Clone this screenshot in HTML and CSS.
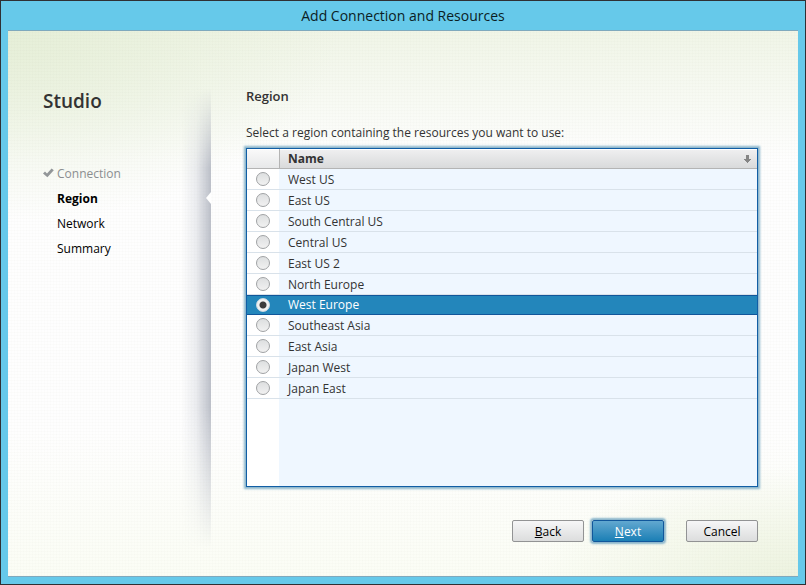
FILE: index.html
```html
<!DOCTYPE html>
<html lang="en">
<head>
<meta charset="utf-8">
<title>Add Connection and Resources</title>
<link rel="stylesheet" href="styles.css">
</head>
<body>
<div class="window">
  <header class="titlebar">Add Connection and Resources</header>
  <div class="client">
    <aside class="sidebar">
      <h1 class="brand">Studio</h1>
      <ol class="steps">
        <li class="step done"><svg class="check" viewBox="0 0 11 10" aria-hidden="true"><path d="M0 5.6 2 3.6 4 5.4 8.6.6 10.8 2.2 4.4 9.2z"/></svg>Connection</li>
        <li class="step current" aria-current="step">Region</li>
        <li class="step">Network</li>
        <li class="step">Summary</li>
      </ol>
      <div class="fold" aria-hidden="true"></div>
    </aside>
    <form class="page">
      <h2 class="heading">Region</h2>
      <p class="prompt" id="prompt">Select a region containing the resources you want to use:</p>
      <div class="grid">
        <table class="regions" aria-labelledby="prompt">
          <thead>
            <tr><th class="pick"></th><th class="name"><span class="sort">Name<svg class="arrow" viewBox="0 0 7 8" aria-hidden="true"><path d="M2 0h3v4h2v1h-1v1h-1v1h-1v1h-1v-1h-1v-1h-1v-1h-1v-1h2z"/></svg></span></th></tr>
          </thead>
          <tbody>
            <tr><td class="pick"><input type="radio" name="region" id="r1"></td><td><label for="r1">West US</label></td></tr>
            <tr><td class="pick"><input type="radio" name="region" id="r2"></td><td><label for="r2">East US</label></td></tr>
            <tr><td class="pick"><input type="radio" name="region" id="r3"></td><td><label for="r3">South Central US</label></td></tr>
            <tr><td class="pick"><input type="radio" name="region" id="r4"></td><td><label for="r4">Central US</label></td></tr>
            <tr><td class="pick"><input type="radio" name="region" id="r5"></td><td><label for="r5">East US 2</label></td></tr>
            <tr><td class="pick"><input type="radio" name="region" id="r6"></td><td><label for="r6">North Europe</label></td></tr>
            <tr class="selected"><td class="pick"><input type="radio" name="region" id="r7" checked></td><td><label for="r7">West Europe</label></td></tr>
            <tr><td class="pick"><input type="radio" name="region" id="r8"></td><td><label for="r8">Southeast Asia</label></td></tr>
            <tr><td class="pick"><input type="radio" name="region" id="r9"></td><td><label for="r9">East Asia</label></td></tr>
            <tr><td class="pick"><input type="radio" name="region" id="r10"></td><td><label for="r10">Japan West</label></td></tr>
            <tr><td class="pick"><input type="radio" name="region" id="r11"></td><td><label for="r11">Japan East</label></td></tr>
          </tbody>
        </table>
      </div>
      <div class="actions">
        <button type="button" class="btn"><u>B</u>ack</button>
        <button type="button" class="btn primary"><u>N</u>ext</button>
        <button type="button" class="btn cancel">Cancel</button>
      </div>
    </form>
  </div>
</div>
</body>
</html>
```
FILE: styles.css
```css
* { box-sizing: border-box; }

body {
  margin: 0;
  font: 12px/16px "Open Sans", "Noto Sans", sans-serif;
  color: #333;
}

.window {
  display: flex;
  flex-direction: column;
  min-height: 100vh;
  padding: 0 7px 7px;
  border: 1px solid #2f3034;
  background: #66c9ea;
}

.titlebar {
  height: 29px;
  line-height: 29px;
  font-size: 14px;
  text-align: center;
  color: #0b1d24;
}

.client {
  flex: 1;
  display: flex;
  border-top: 1px solid #7fa9bd;
  border-bottom: 1px solid #7fa9bd;
  background:
    repeating-linear-gradient(0deg, rgba(120, 120, 90, .02) 0 1px, transparent 1px 3px),
    repeating-linear-gradient(90deg, rgba(120, 120, 90, .015) 0 1px, transparent 1px 3px),
    radial-gradient(ellipse 330px 190px at 0 0, #e6efd8, rgba(238, 245, 227, 0)),
    radial-gradient(ellipse 260px 110px at 100% 100%, #edf3e0, rgba(241, 246, 231, 0)),
    linear-gradient(#f0f5e7, #fefefe 130px, #fefefe 400px, #fbfdf5);
}

.sidebar {
  position: relative;
  flex: 0 0 203px;
  padding: 58px 0 0 35px;
}

.brand {
  margin: 0;
  font-size: 19px;
  font-weight: 600;
  line-height: 24px;
}

.steps {
  margin: 48px 0 0;
  padding: 0;
  list-style: none;
}

.step {
  position: relative;
  padding-left: 14px;
  line-height: 25px;
  color: #000;
}

.step.done { color: #8b8e90; }
.step.current { font-weight: 700; }

.check {
  position: absolute;
  left: 0;
  top: 7px;
  width: 11px;
  height: 10px;
  fill: #929698;
}

/* Shaded page edge with the pointer notch for the current step */
.fold {
  position: absolute;
  top: 57px;
  right: 0;
  bottom: 26px;
  width: 30px;
  background: linear-gradient(to right, rgba(180, 185, 198, 0), rgba(180, 185, 198, .25) 50%, rgba(165, 170, 182, .75));
  -webkit-mask-image: linear-gradient(transparent, #000 80px, #000 320px, transparent);
  mask-image: linear-gradient(transparent, #000 80px, #000 320px, transparent);
}

.fold::after {
  content: "";
  position: absolute;
  top: 104px;
  right: 0;
  border: 6px solid transparent;
  border-left: 0;
  border-right: 5px solid #fff;
}

.page {
  flex: 1;
  display: flex;
  flex-direction: column;
  padding: 57px 40px 34px 35px;
}

.heading {
  margin: 0;
  font-size: 13px;
  font-weight: 600;
}

.prompt { margin: 21px 0 7px; }

.grid {
  flex: 1;
  border: 1px solid #115ea5;
  box-shadow: 0 0 2px 2px #8ab5cb;
  background: linear-gradient(to right, #fff 32px, #eff7ff 32px);
}

.regions {
  width: 100%;
  border-collapse: separate;
  border-spacing: 0;
  table-layout: fixed;
}

.regions th {
  height: 20px;
  padding: 0 6px 0 8px;
  border-bottom: 1px solid #b4b4b4;
  box-shadow: inset 0 1px #fff;
  background: linear-gradient(#f0f0f1, #d9dadb);
  text-align: left;
  font-weight: 700;
}

.regions th.pick {
  width: 33px;
  border-right: 1px solid #b4b4b4;
  background: linear-gradient(#fafafa, #e7e8e9);
}

.sort {
  display: flex;
  align-items: center;
  justify-content: space-between;
}

.arrow {
  width: 7px;
  height: 8px;
  fill: #858585;
}

.regions td {
  height: 21px;
  padding: 2px 8px 0;
  border-bottom: 1px solid #d9e2ea;
}

.regions td.pick {
  padding: 0 0 0 9px;
}

.regions input {
  appearance: none;
  display: block;
  width: 14px;
  height: 14px;
  margin: 0;
  border: 1px solid #a0a2a4;
  border-radius: 50%;
  background: linear-gradient(#dddfe0, #f1f1f1);
}

.regions input:checked {
  border-color: #d0dbe2;
  background: radial-gradient(circle, #3c3c3c 2px, #3c3c3c 3px, #f1f1f1 4px);
}

.regions label { display: block; }

.regions .selected td {
  height: 20px;
  padding-top: 0;
  border-top: 1px solid #11569a;
  border-bottom-color: #11569a;
  background: #2386bb;
  color: #fff;
}

.actions {
  display: flex;
  justify-content: flex-end;
  gap: 8px;
  margin-top: 33px;
}

.btn {
  width: 72px;
  height: 22px;
  padding: 1px 0 0;
  border: 1px solid #929394;
  border-radius: 2px;
  background: linear-gradient(#f6f6f7, #dcdddd);
  font: inherit;
  line-height: 20px;
  color: #000;
}

.btn.primary {
  border-color: #11579b;
  box-shadow: 0 0 2px 2px #8ab5cb;
  background: linear-gradient(#62a8d0, #1b7fb5);
  color: #fff;
}

.btn.cancel { margin-left: 14px; }
```
